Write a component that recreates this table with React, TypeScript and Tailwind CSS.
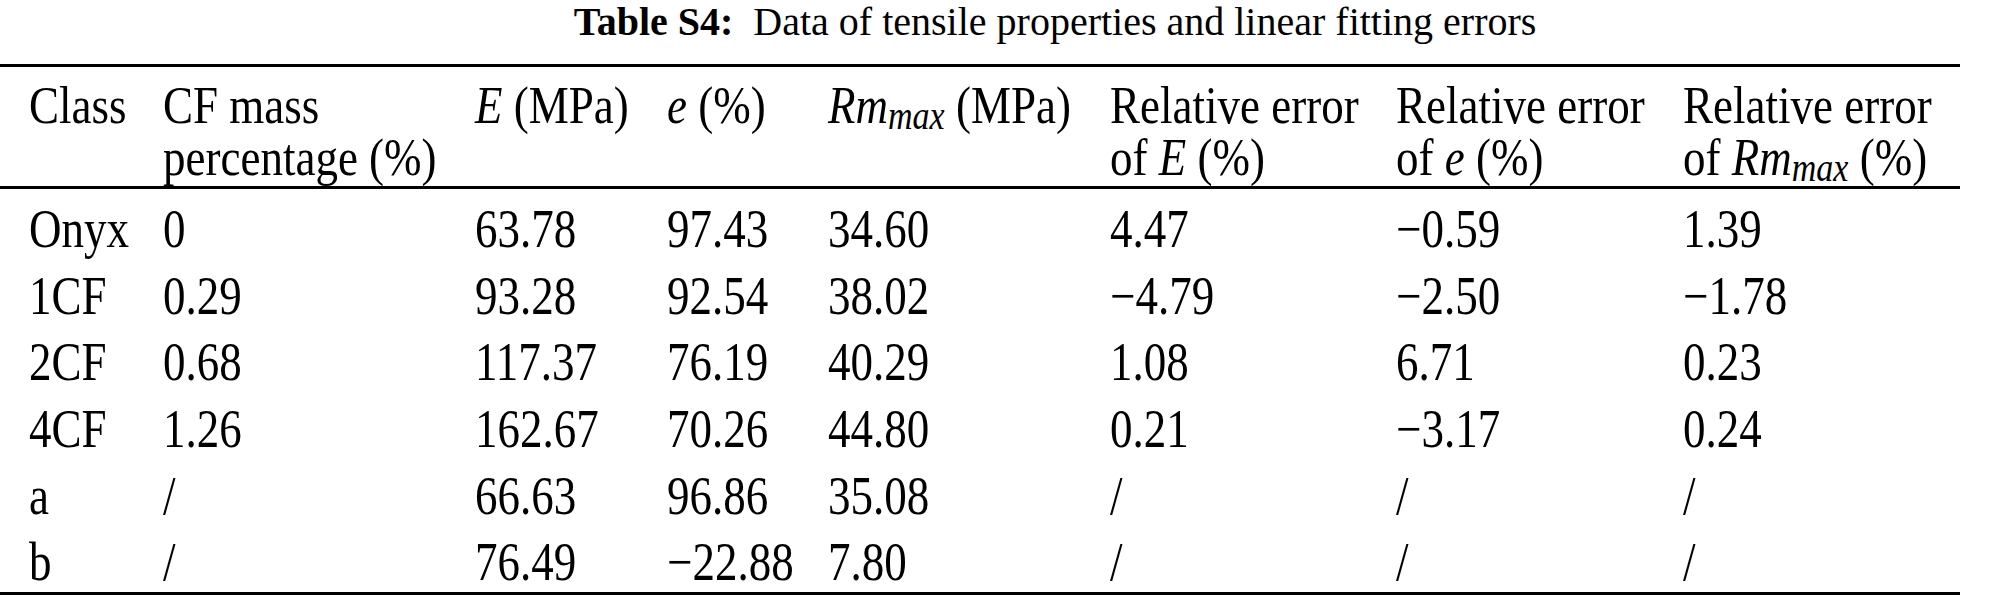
const rows: string[][] = [
  ["Onyx", "0", "63.78", "97.43", "34.60", "4.47", "\u22120.59", "1.39"],
  ["1CF", "0.29", "93.28", "92.54", "38.02", "\u22124.79", "\u22122.50", "\u22121.78"],
  ["2CF", "0.68", "117.37", "76.19", "40.29", "1.08", "6.71", "0.23"],
  ["4CF", "1.26", "162.67", "70.26", "44.80", "0.21", "\u22123.17", "0.24"],
  ["a", "/", "66.63", "96.86", "35.08", "/", "/", "/"],
  ["b", "/", "76.49", "\u221222.88", "7.80", "/", "/", "/"],
];

const cols = "grid grid-cols-[163px_312px_192px_161px_282px_286px_287px_1fr]";

function RmMax() {
  return (
    <>
      <i>Rm</i>
      <sub className="italic text-[34px] leading-none relative top-[5px]">max</sub>
    </>
  );
}

// one header line, stretched like the table body text
function Line({ children }: { children: React.ReactNode }) {
  return <div className="scale-y-[1.18] whitespace-nowrap">{children}</div>;
}

export default function App() {
  return (
    <div className="w-[1989px] h-[597px] bg-white text-black font-['Liberation_Serif','Times_New_Roman',serif] text-[45px] overflow-hidden">
      <div className="h-[64px] w-[1960px] pl-[150px] text-center text-[40px] leading-[43px] whitespace-nowrap">
        <b>Table S4:</b>&nbsp; Data of tensile properties and linear fitting errors
      </div>
      <div className="w-[1960px] border-t-[3px] border-b-[3px] border-black">
        <div className={`${cols} h-[122px] border-b-[3px] border-black leading-[52px] pt-[12px]`}>
          <div className="pl-[29px]">
            <Line>Class</Line>
          </div>
          <div>
            <Line>CF mass</Line>
            <Line>percentage (%)</Line>
          </div>
          <div>
            <Line>
              <i>E</i> (MPa)
            </Line>
          </div>
          <div>
            <Line>
              <i>e</i> (%)
            </Line>
          </div>
          <div>
            <Line>
              <RmMax /> (MPa)
            </Line>
          </div>
          <div>
            <Line>Relative error</Line>
            <Line>
              of <i>E</i> (%)
            </Line>
          </div>
          <div>
            <Line>Relative error</Line>
            <Line>
              of <i>e</i> (%)
            </Line>
          </div>
          <div>
            <Line>Relative error</Line>
            <Line>
              of <RmMax /> (%)
            </Line>
          </div>
        </div>
        <div className="h-[403px] pt-[7px]">
          {rows.map((r) => (
            <div key={r[0]} className={`${cols} h-[66.7px] leading-[66.7px] scale-y-[1.2]`}>
              {r.map((c, i) => (
                <div key={i} className={i === 0 ? "pl-[29px]" : ""}>
                  {c}
                </div>
              ))}
            </div>
          ))}
        </div>
      </div>
    </div>
  );
}
